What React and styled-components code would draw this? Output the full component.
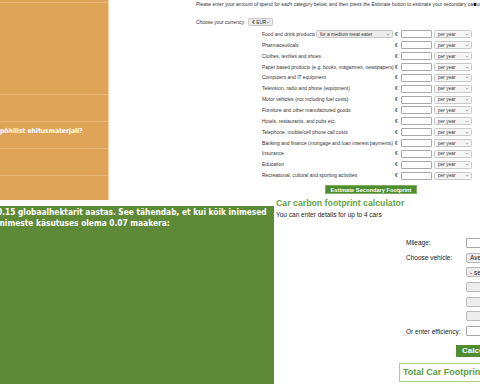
import styled, { createGlobalStyle } from "styled-components";

const GlobalStyle = createGlobalStyle`
  html, body {
    margin: 0;
    padding: 0;
    background: #fff;
  }
  body {
    font-family: "Liberation Sans", Arial, sans-serif;
  }
`;

const categories = [
  "Food and drink products",
  "Pharmaceuticals",
  "Clothes, textiles and shoes",
  "Paper based products (e.g. books, magazines, newspapers)",
  "Computers and IT equipment",
  "Television, radio and phone (equipment)",
  "Motor vehicles (not including fuel costs)",
  "Furniture and other manufactured goods",
  "Hotels, restaurants, and pubs etc.",
  "Telephone, mobile/cell phone call costs",
  "Banking and finance (mortgage and loan interest payments)",
  "Insurance",
  "Education",
  "Recreational, cultural and sporting activities",
];

const carRows = [
  { label: "Mileage:", kind: "input" },
  { label: "Choose vehicle:", kind: "select", text: "Average car" },
  { label: "", kind: "select", text: "- select -" },
  { label: "", kind: "select", text: "" },
  { label: "", kind: "select", text: "" },
  { label: "", kind: "select", text: "" },
  { label: "Or enter efficiency:", kind: "input" },
];

function Chevron() {
  return (
    <ChevronIcon viewBox="0 0 6 4" width="4" height="3">
      <polyline points="0.8,0.8 3,3 5.2,0.8" fill="none" stroke="#777" strokeWidth="0.9" />
    </ChevronIcon>
  );
}

export default function App() {
  return (
    <>
      <GlobalStyle />
      <Page>
        <TopRow>
          <OrangePanel>
            <OrangeBlock />
            <OrangeRow />
            <OrangeRow>
              <OrangeText>põhilist ehitusmaterjali?</OrangeText>
            </OrangeRow>
            <OrangeRow />
            <OrangeRow $last />
          </OrangePanel>

          <SpendForm>
            <Marker />
            <Intro>
              Please enter your amount of spend for each category below, and then press the Estimate button to estimate your secondary carbon footprint.
            </Intro>
            <CurrencyLine>
              Choose your currency:
              <Select $w={25} $gray>
                € EUR
                <Chevron />
              </Select>
            </CurrencyLine>

            <SpendGrid>
              {categories.map((c, i) => (
                <SpendRow key={c}>
                  <SpendLabel>
                    {c}
                    {i === 0 && (
                      <Select $w={77} $gray>
                        for a medium meat eater
                        <Chevron />
                      </Select>
                    )}
                  </SpendLabel>
                  <Euro>€</Euro>
                  <TextBox $w={31} $h={8} />
                  <Select $w={38}>
                    per year
                    <Chevron />
                  </Select>
                </SpendRow>
              ))}
            </SpendGrid>

            <EstimateButton>Estimate Secondary Footprint</EstimateButton>
          </SpendForm>
        </TopRow>

        <BottomRow>
          <GreenPanel>
            <GreenText>
              0.15 globaalhektarit aastas. See tähendab, et kui kõik inimesed
              <br />
              inimeste käsutuses olema 0.07 maakera:
            </GreenText>
          </GreenPanel>

          <CarSection>
            <CarTitle>Car carbon footprint calculator</CarTitle>
            <CarSubtitle>You can enter details for up to 4 cars</CarSubtitle>
            <CarForm>
              {carRows.map((r, i) => (
                <CarRow key={i}>
                  <CarLabel>{r.label}</CarLabel>
                  {r.kind === "input" ? (
                    <TextBox $w={60} $h={10} />
                  ) : (
                    <CarSelect>{r.text}</CarSelect>
                  )}
                </CarRow>
              ))}
            </CarForm>
            <CalcButton>Calculate</CalcButton>
            <TotalBox>Total Car Footprint = 0.00 metric tons of CO2e</TotalBox>
          </CarSection>
        </BottomRow>
      </Page>
    </>
  );
}

const Page = styled.div`
  width: 480px;
  height: 384px;
  overflow: hidden;
  display: flex;
  flex-direction: column;
`;

const TopRow = styled.div`
  display: flex;
  height: 200px;
  flex-shrink: 0;
`;

const OrangePanel = styled.div`
  width: 109px;
  height: 200px;
  padding-top: 2px;
  box-sizing: border-box;
  background: #e0a458;
  border-right: 1px solid #f6d2a2;
  display: flex;
  flex-direction: column;
  overflow: hidden;
`;

const OrangeBlock = styled.div`
  height: 91px;
  border-top: 1px solid #e9b879;
`;

const OrangeRow = styled.div`
  height: ${(p) => (p.$last ? "auto" : "26px")};
  flex: ${(p) => (p.$last ? 1 : "none")};
  border-top: 1px solid #e9b879;
`;

const OrangeText = styled.div`
  padding-top: 5px;
  font-family: "DejaVu Sans Condensed", Lato, sans-serif;
  font-weight: 700;
  font-size: 6.7px;
  line-height: 8px;
  color: #fff;
  white-space: nowrap;
`;

const SpendForm = styled.div`
  position: relative;
  margin-left: 87px;
  padding-top: 2px;
  width: 283px;
  color: #333;
`;

const Marker = styled.div`
  position: absolute;
  left: 278px;
  top: 3px;
  width: 2px;
  height: 3px;
  background: #111;
`;

const Intro = styled.div`
  font-size: 4.95px;
  line-height: 6px;
  white-space: nowrap;
`;

const CurrencyLine = styled.div`
  margin-top: 9px;
  height: 10px;
  display: flex;
  align-items: center;
  gap: 3px;
  font-size: 4.9px;
`;

const Select = styled.div`
  width: ${(p) => p.$w}px;
  height: 8px;
  box-sizing: border-box;
  flex-shrink: 0;
  padding: 0 2px 0 3px;
  display: flex;
  align-items: center;
  justify-content: space-between;
  border: 1px solid #c9c9c9;
  border-radius: 1.5px;
  background: ${(p) => (p.$gray ? "#ececec" : "#f6f6f6")};
  font-size: 4.8px;
  color: #333;
  white-space: nowrap;
  overflow: hidden;
`;

const ChevronIcon = styled.svg`
  flex-shrink: 0;
`;

const SpendGrid = styled.div`
  margin-top: 2px;
  margin-left: 66px;
  display: grid;
  grid-auto-rows: 10.86px;
`;

const SpendRow = styled.div`
  display: grid;
  grid-template-columns: 133px 6px 33px 38px;
  align-items: center;
`;

const SpendLabel = styled.div`
  display: flex;
  align-items: center;
  justify-content: space-between;
  padding-right: 2px;
  font-size: 4.95px;
  white-space: nowrap;
`;

const Euro = styled.span`
  font-size: 4.9px;
`;

const TextBox = styled.div`
  width: ${(p) => p.$w}px;
  height: ${(p) => p.$h}px;
  box-sizing: border-box;
  border: 1px solid #a9a9a9;
  border-radius: 1px;
  background: #fff;
`;

const EstimateButton = styled.div`
  margin-top: 4px;
  margin-left: 129px;
  width: 92px;
  height: 9px;
  box-sizing: border-box;
  display: flex;
  align-items: center;
  justify-content: center;
  background: #4f8d2f;
  border: 1px solid #7db062;
  color: #fff;
  font-weight: 700;
  font-size: 5.7px;
  white-space: nowrap;
`;

const BottomRow = styled.div`
  display: flex;
  align-items: flex-start;
  flex: 1;
`;

const GreenPanel = styled.div`
  margin-top: 6px;
  width: 274px;
  height: 178px;
  flex-shrink: 0;
  padding-top: 1px;
  box-sizing: border-box;
  background: #5e8937;
  overflow: hidden;
`;

const GreenText = styled.div`
  margin-left: -3px;
  font-family: "DejaVu Sans Condensed", Lato, sans-serif;
  font-weight: 700;
  font-size: 8.3px;
  line-height: 11px;
  color: #fff;
  white-space: nowrap;
`;

const CarSection = styled.div`
  margin-left: 2px;
  width: 204px;
  flex-shrink: 0;
  color: #222;
`;

const CarTitle = styled.div`
  font-weight: 700;
  font-size: 8.75px;
  line-height: 7px;
  color: #66a647;
  white-space: nowrap;
`;

const CarSubtitle = styled.div`
  margin-top: 5px;
  font-size: 6.5px;
  line-height: 6px;
  white-space: nowrap;
`;

const CarForm = styled.div`
  margin-top: 17.6px;
  margin-left: 130px;
  display: grid;
  grid-auto-rows: 14.7px;
`;

const CarRow = styled.div`
  display: grid;
  grid-template-columns: 60px 60px;
  align-items: center;
`;

const CarLabel = styled.span`
  font-size: 6.5px;
  white-space: nowrap;
`;

const CarSelect = styled.div`
  width: 60px;
  height: 10px;
  box-sizing: border-box;
  padding-left: 3px;
  display: flex;
  align-items: center;
  border: 1px solid #b9b9b9;
  border-radius: 2px;
  background: #ededed;
  font-size: 6.5px;
  white-space: nowrap;
`;

const CalcButton = styled.div`
  margin-top: 6.5px;
  margin-left: 180px;
  width: 50px;
  height: 12px;
  box-sizing: border-box;
  padding-left: 6px;
  display: flex;
  align-items: center;
  background: #4f8d2f;
  color: #fff;
  font-weight: 700;
  font-size: 8px;
  white-space: nowrap;
`;

const TotalBox = styled.div`
  margin-top: 6px;
  margin-left: 123px;
  width: 200px;
  height: 19px;
  box-sizing: border-box;
  padding-left: 3px;
  display: flex;
  align-items: center;
  border: 1px solid #a9d18e;
  color: #5d9e3e;
  font-weight: 700;
  font-size: 9px;
  white-space: nowrap;
`;
